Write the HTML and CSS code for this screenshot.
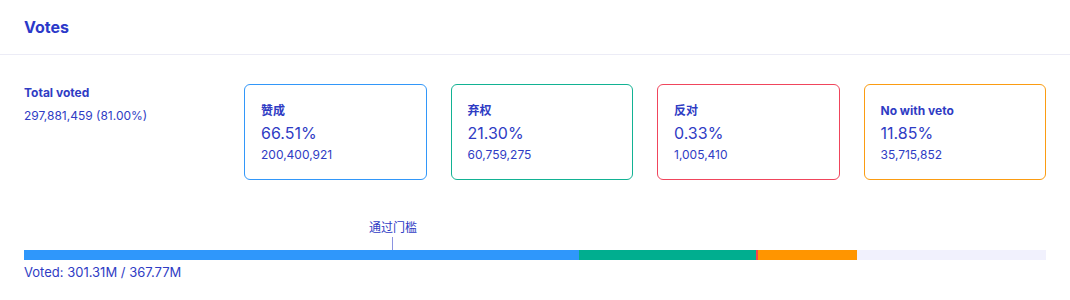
FILE: index.html
```html
<!DOCTYPE html>
<html lang="zh">
  <head>
    <meta charset="UTF-8" />
    <title>Votes</title>
    <link rel="stylesheet" href="styles.css">
  </head>
  <body>
    <div class="panel">
      <div class="panel-head">Votes</div>
      <div class="panel-body">
        <div class="summary">
          <div class="total">
            <div class="total-label">Total voted</div>
            <div class="total-value">297,881,459 (81.00%)</div>
          </div>
          <div class="cards">
            <div class="card card-yes">
              <div class="card-label">赞成</div>
              <div class="card-pct">66.51%</div>
              <div class="card-num">200,400,921</div>
            </div>
            <div class="card card-abstain">
              <div class="card-label">弃权</div>
              <div class="card-pct">21.30%</div>
              <div class="card-num">60,759,275</div>
            </div>
            <div class="card card-no">
              <div class="card-label">反对</div>
              <div class="card-pct">0.33%</div>
              <div class="card-num">1,005,410</div>
            </div>
            <div class="card card-veto">
              <div class="card-label">No with veto</div>
              <div class="card-pct">11.85%</div>
              <div class="card-num">35,715,852</div>
            </div>
          </div>
        </div>
        <div class="progress">
          <div class="bar-wrap">
            <div class="threshold" style="left: 36.1%">
              <span class="threshold-label">通过门槛</span>
              <span class="threshold-line"></span>
            </div>
            <div class="bar">
              <div class="seg seg-yes" style="width: 54.31%"></div>
              <div class="seg seg-abstain" style="width: 17.32%"></div>
              <div class="seg seg-no" style="width: 0.2%"></div>
              <div class="seg seg-veto" style="width: 9.69%"></div>
            </div>
          </div>
          <div class="voted">Voted: 301.31M / 367.77M</div>
        </div>
      </div>
    </div>
  </body>
</html>
```

FILE: styles.css
```css
body {
  margin: 0;
  background: #fff;
  font-family: Inter, "Noto Sans CJK SC", sans-serif;
  color: #2f3cc4;
}
.panel-head {
  height: 54px;
  padding: 0 24px;
  display: flex;
  align-items: center;
  border-bottom: 1px solid #ececf6;
  font-size: 16px;
  font-weight: 700;
  color: #2b39c9;
}
.panel-body {
  padding: 29px 24px 0;
}
.summary {
  display: flex;
}
.total {
  width: 220px;
  flex-shrink: 0;
  padding-top: 1px;
}
.total-label {
  font-size: 12px;
  font-weight: 700;
  line-height: 16px;
}
.total-value {
  margin-top: 7px;
  font-size: 12px;
  line-height: 16px;
}
.cards {
  flex: 1;
  display: grid;
  grid-template-columns: repeat(4, 1fr);
  gap: 24px;
}
.card {
  height: 96px;
  box-sizing: border-box;
  border: 1px solid;
  border-radius: 6px;
  padding: 17px 16px 0;
}
.card-yes { border-color: #3297f9; }
.card-abstain { border-color: #12b293; }
.card-no { border-color: #f0455c; }
.card-veto { border-color: #fb9c12; }
.card-label {
  font-size: 12px;
  font-weight: 700;
  line-height: 18px;
}
.card-pct {
  margin-top: 2px;
  font-size: 16px;
  line-height: 22px;
}
.card-num {
  margin-top: 2px;
  font-size: 12px;
  line-height: 18px;
}
.progress {
  margin-top: 40px;
}
.bar-wrap {
  position: relative;
  padding-top: 30px;
}
.threshold {
  position: absolute;
  top: 0;
  display: flex;
  flex-direction: column;
  align-items: center;
  transform: translateX(-50%);
}
.threshold-label {
  font-size: 12px;
  line-height: 16px;
}
.threshold-line {
  width: 1px;
  height: 13px;
  margin-top: 1px;
  background: #8b93e0;
}
.bar {
  display: flex;
  height: 10px;
  background: #f1f1fd;
}
.seg-yes { background: #2f97fb; }
.seg-abstain { background: #00ae8f; }
.seg-no { background: #f5414f; }
.seg-veto { background: #ff9500; }
.voted {
  margin-top: 4px;
  font-size: 13px;
  line-height: 17px;
}
```
